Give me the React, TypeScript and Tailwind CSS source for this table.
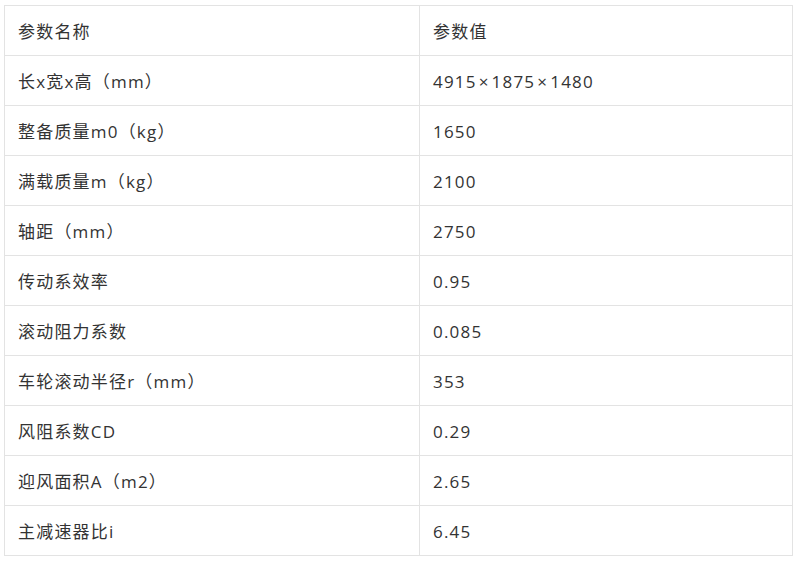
const rows: [string, string][] = [
  ["长x宽x高（mm）", "4915×1875×1480"],
  ["整备质量m0（kg）", "1650"],
  ["满载质量m（kg）", "2100"],
  ["轴距（mm）", "2750"],
  ["传动系效率", "0.95"],
  ["滚动阻力系数", "0.085"],
  ["车轮滚动半径r（mm）", "353"],
  ["风阻系数CD", "0.29"],
  ["迎风面积A（m2）", "2.65"],
  ["主减速器比i", "6.45"],
];

const cell =
  "border border-[#e3e3e3] h-[50px] px-[13px] pt-[3px] text-left align-middle font-normal";

// the "×" in the reference sits with a bit more room around it
function Value({ text }: { text: string }) {
  const parts = text.split("×");
  return (
    <>
      {parts.map((p, i) => (
        <span key={i}>
          {i > 0 && <span className="mx-[2px]">×</span>}
          {p}
        </span>
      ))}
    </>
  );
}

export default function App() {
  return (
    <div className="w-[800px] h-[561px] bg-white pt-[5px] pl-[4px] font-['Open_Sans','Noto_Sans_CJK_SC',sans-serif] text-[17px] tracking-[1.2px] text-[#333]">
      <table className="w-[789px] border-collapse table-fixed">
        <colgroup>
          <col className="w-[415px]" />
          <col />
        </colgroup>
        <thead>
          <tr>
            <th className={cell}>参数名称</th>
            <th className={cell}>参数值</th>
          </tr>
        </thead>
        <tbody>
          {rows.map(([name, value]) => (
            <tr key={name}>
              <td className={cell}>{name}</td>
              <td className={cell}>
                <Value text={value} />
              </td>
            </tr>
          ))}
        </tbody>
      </table>
    </div>
  );
}
